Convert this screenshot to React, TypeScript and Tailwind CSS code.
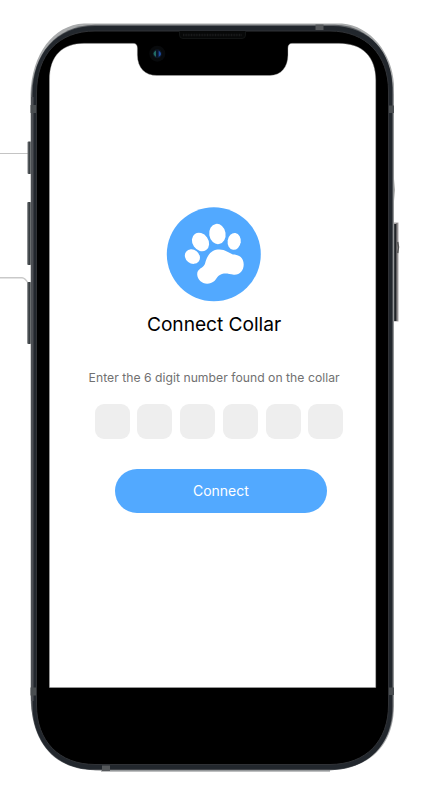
const digits = [0, 1, 2, 3, 4, 5];

function PhoneFrame() {
  return (
    <svg className="absolute inset-0" width="427" height="800" viewBox="0 0 427 800" fill="none" aria-hidden="true">
      <defs>
        <linearGradient id="side" x1="0" x2="1" y1="0" y2="0">
          <stop offset="0" stopColor="#777a7d" />
          <stop offset="0.4" stopColor="#42484b" />
          <stop offset="1" stopColor="#22272c" />
        </linearGradient>
      </defs>
      {/* callout lines */}
      <path d="M0 153.5H28" stroke="#c4c4c4" />
      <path d="M0 277.8H22Q25 278 28 283" stroke="#c9c9c9" strokeWidth="1.4" />
      {/* side buttons */}
      <rect x="27.5" y="141.5" width="4" height="32.5" rx="1" fill="url(#side)" />
      <rect x="27.2" y="202" width="4" height="63" rx="1" fill="url(#side)" />
      <rect x="27.2" y="282" width="4" height="62" rx="1" fill="url(#side)" />
      <path d="M393.500 179Q394.800 190 393.500 201" stroke="#777" />
      <rect x="393" y="222.5" width="5.5" height="99" fill="#aaa6a7" />
      <rect x="394.2" y="224" width="2.3" height="97" fill="#202428" />
      <rect x="396.5" y="223" width="0.8" height="98" fill="#5d5a5c" />
      <path d="M397.700 242Q399.300 247.500 397.700 253" stroke="#555" strokeWidth="1.600" />
      {/* metal band */}
      <path d="M30.500 94C32 54 53 25 84 23.500H342C371 26 392 53 394 84V706C393.800 746 369 769 330 770.300V771.800H101V770.500C60 770 32 745 30.500 697Z" fill="#a9abac" />
      <path d="M31 96C33 54 55 25.500 95 24.700H335C370 25.500 393 54 393.300 95V706C393 744 368 769.500 330 770.300H95C55 769.500 33 744 31 703Z" fill="#5e6165" />
      <path d="M32.500 93C33 54 56 26 95 26H333C369 26 392.300 52 392.300 88V707C392.300 745 368 769.500 330 769.500H94C56 769.500 32.500 742 32.500 705Z" fill="#22272d" />
      <rect x="31" y="97" width="2.500" height="604" fill="#4c4f54" />
      <path d="M36.500 93C36.500 55 58 31 95 31H330C366 31 388.500 55 388.500 91V705C388.500 741 366 764.500 330 764.500H95C59 764.500 36.500 741 36.500 705Z" fill="#000" stroke="#303236" strokeWidth="1" />
      {/* antenna bands */}
      <path d="M30.500 105h5.500v8h-5.500zM30.500 687.500h5.500v8h-5.500zM389 105.500h5v7.500h-5zM389 687.500h5v7.500h-5z" fill="#4a4e51" />
      <path d="M315.500 24.500h8v5.500h-8zM102 765.500h8v5.500h-8z" fill="#55585b" />
      {/* display */}
      <path d="M49.500 687.500V80C49.500 55 63 43.400 84 43.400H133.500Q137.200 43.400 137.300 48V55C137.500 68 145 75.500 157 75.500H270C281 75.500 288 67 288 55V48Q288 43.400 292 43.400H339C363 43.400 375.700 57 375.700 80V687.500Z" fill="#fff" stroke="#b9b9b9" strokeWidth="0.4" />
      {/* earpiece and camera */}
      <path d="M179.500 31V35Q179.500 38.500 183 38.500H242Q245.500 38.500 245.500 35V31" fill="#070808" stroke="#121414" />
      <path d="M183 35H242" stroke="#191a1b" strokeWidth="2.500" strokeDasharray="1 0.6" />
      <circle cx="157.300" cy="53.700" r="8" fill="#080a0c" />
      <circle cx="157.300" cy="53.700" r="4.500" fill="#0d1725" />
      <path d="M156 50.500Q151 53.500 156 57Z" fill="#226b63" />
      <path d="M158.600 50.500Q163.500 54 158.600 57Z" fill="#1d4aa0" />
      <path d="M157.300 50.500V57" stroke="#071331" />
    </svg>
  );
}

function Paw() {
  return (
    <svg className="h-[95px] w-[95px] shrink-0" viewBox="0 0 95 95" aria-hidden="true">
      <circle cx="47.800" cy="47.300" r="47" fill="#52a9ff" />
      <g fill="#fff" transform="translate(0.4 0)">
        <ellipse cx="26" cy="49.600" rx="8" ry="6.800" transform="rotate(38 26 49.600)" />
        <ellipse cx="34.100" cy="35" rx="8" ry="9.800" transform="rotate(-35 34.100 35)" />
        <ellipse cx="51" cy="27" rx="8.200" ry="10.200" transform="rotate(-9 51 27)" />
        <ellipse cx="67.800" cy="34.400" rx="6.600" ry="8.400" transform="rotate(8 67.800 34.400)" />
        <path d="M38.500 57C41 46.500 46 42.500 53 42.500C59 42.500 62.500 46 66.500 47.500C73 47.500 77.300 51 77.300 57.500C77.300 63.500 73.500 68 67.500 67.700C62 67 60 65.800 55.500 67C49 69 51 74 44.500 76C37.500 78.500 31 73.500 30.800 67.500C30.600 61.500 36.500 61.500 38.500 57Z" />
      </g>
    </svg>
  );
}

export default function App() {
  return (
    <main className="relative h-[800px] w-[427px] overflow-hidden bg-white font-['Inter',sans-serif]">
      <PhoneFrame />
      <section className="relative flex h-full flex-col items-center pt-[207px]">
        <Paw />
        <h1 className="mt-[10px] ml-[1px] text-[19.2px] leading-6 font-normal tracking-[-0.05px] whitespace-nowrap text-black">
          Connect Collar
        </h1>
        <p className="mt-[31px] ml-[1.2px] text-[12.2px] leading-[22px] tracking-[0.02px] whitespace-nowrap text-[#717171]">
          Enter the 6 digit number found on the collar
        </p>
        <div className="mt-[15px] ml-[11px] flex gap-[7.7px]">
          {digits.map((d) => (
            <input
              key={d}
              maxLength={1}
              inputMode="numeric"
              aria-label={`${d + 1}`}
              className="h-[35px] w-[35px] rounded-[9px] bg-[#eeeeee] text-center outline-none"
            />
          ))}
        </div>
        <button className="mt-[29.5px] ml-[14.8px] h-[44.5px] w-[211.4px] rounded-full bg-[#52a9ff] text-[14px] text-white">
          Connect
        </button>
      </section>
    </main>
  );
}
